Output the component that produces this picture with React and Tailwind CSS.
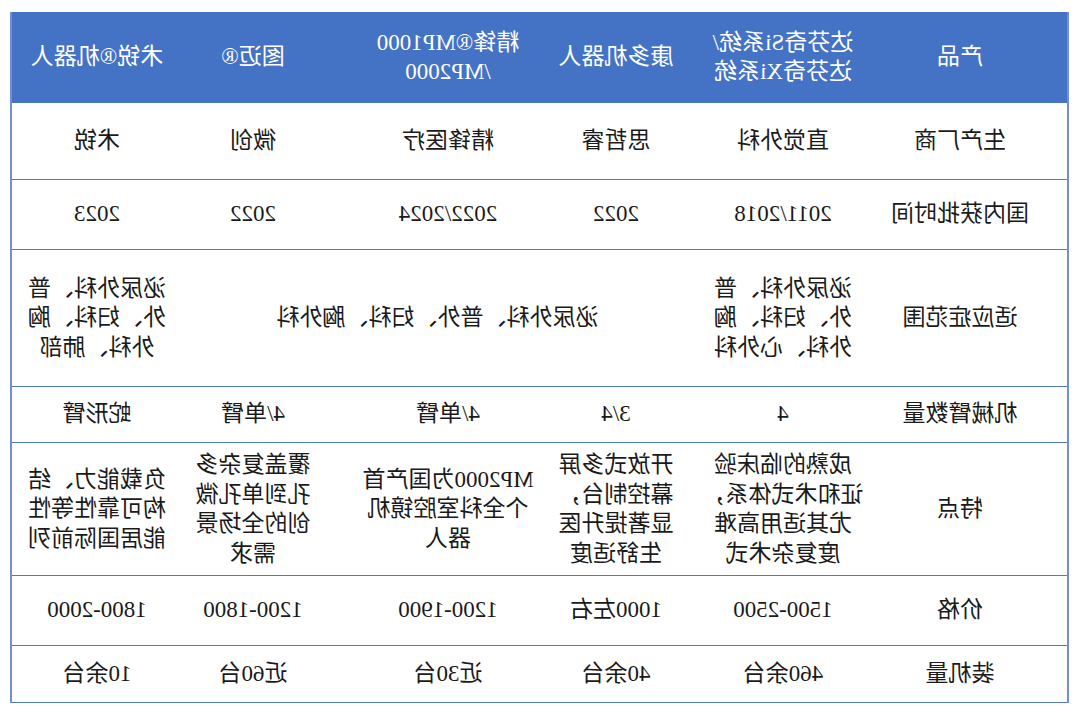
import React from "react";

const cols = "grid grid-cols-[195px_172px_168px_181px_176px_163px]";
// small nudges so each column's text sits where the source table has it
const pad = ["pl-[19px]", "pl-[6px]", "", "pr-[13px]", "pl-[20px]", "pr-[7px]"];

const rows = [
  { h: "h-[77px]", cells: ["生产厂商", "直觉外科", "思哲睿", "精锋医疗", "微创", "术锐"] },
  { h: "h-[70px]", cells: ["国内获批时间", "2011/2018", "2022", "2022/2024", "2022", "2023"] },
  {
    h: "h-[137px]",
    cells: [
      "适应症范围",
      ["泌尿外科、普", "外、妇科、胸", "外科、心外科"],
      { span: true, text: "泌尿外科、普外、妇科、胸外科" },
      ["泌尿外科、普", "外、妇科、胸", "外科、肺部"],
    ],
  },
  { h: "h-[56px]", cells: ["机械臂数量", "4", "3/4", "4/单臂", "4/单臂", "蛇形臂"] },
  {
    h: "h-[133px]",
    cells: [
      "特点",
      ["成熟的临床验", "证和术式体系，", "尤其适用高难", "度复杂术式"],
      ["开放式多屏", "幕控制台，", "显著提升医", "生舒适度"],
      ["MP2000为国产首", "个全科室腔镜机", "器人"],
      ["覆盖复杂多", "孔到单孔微", "创的全场景", "需求"],
      ["负载能力、结", "构可靠性等性", "能居国际前列"],
    ],
  },
  { h: "h-[70px]", cells: ["价格", "1500-2500", "1000左右", "1200-1900", "1200-1800", "1800-2000"] },
  { h: "h-[57px]", cells: ["装机量", "460余台", "40余台", "近30台", "近60台", "10余台"] },
];

const header = [
  "产品",
  ["达芬奇Si系统/", "达芬奇Xi系统"],
  "康多机器人",
  ["精锋®MP1000", "/MP2000"],
  "图迈®",
  "术锐®机器人",
];

const Lines = ({ value }) =>
  Array.isArray(value) ? (
    <div className="flex flex-col items-center leading-[29.5px]">
      {value.map((l) => (
        <span key={l} className="whitespace-nowrap">{l}</span>
      ))}
    </div>
  ) : (
    <span className="whitespace-nowrap">{value}</span>
  );

const Row = ({ h, cells }) => {
  let col = 0;
  return (
    <div className={`${cols} ${h} border-b-[1.5px] border-[#4f79c9]`}>
      {cells.map((c, i) => {
        if (c && c.span) {
          col += 3;
          return (
            <div key={i} className="col-span-3 flex items-center justify-center">
              {c.text}
            </div>
          );
        }
        const p = pad[col];
        col += 1;
        return (
          <div key={i} className={`flex items-center justify-center ${p}`}>
            <Lines value={c} />
          </div>
        );
      })}
    </div>
  );
};

export default function App() {
  return (
    <div className="w-[1080px] h-[713px] bg-white -scale-x-100 overflow-hidden">
      <div
        className="ml-[11px] mt-[12px] w-[1059px] border-x-2 border-[#6f90d6] text-[23px] text-[#1a1a1a]"
        style={{ fontFamily: '"Liberation Serif", "Noto Sans CJK SC", serif' }}
      >
        <div className={`${cols} h-[91px] bg-[#4472c4] text-white border-b-[1.5px] border-[#4472c4]`}>
          {header.map((c, i) => (
            <div key={i} className={`flex items-center justify-center ${pad[i]}`}>
              <Lines value={c} />
            </div>
          ))}
        </div>
        {rows.map((r, i) => (
          <Row key={i} {...r} />
        ))}
      </div>
    </div>
  );
}
